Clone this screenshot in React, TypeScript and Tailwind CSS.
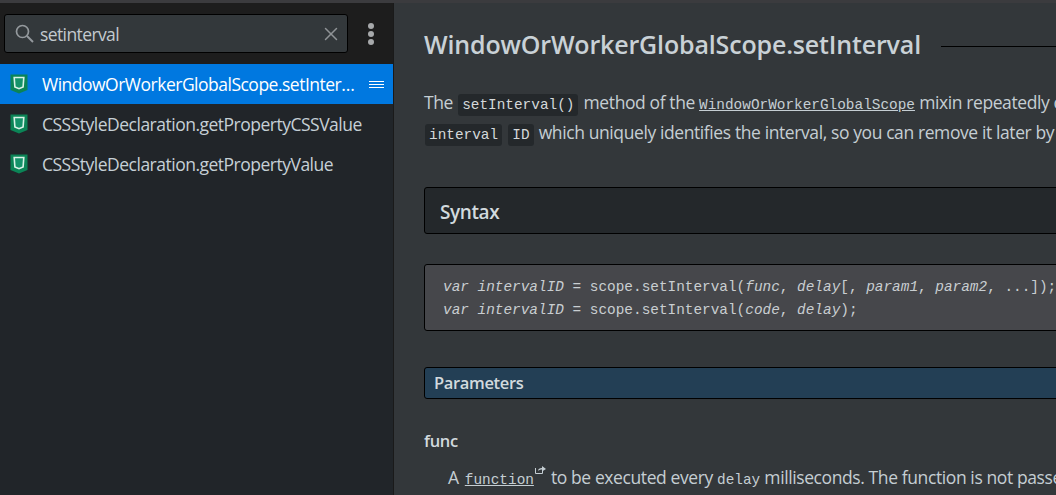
import { X } from 'lucide-react';

const sans = 'font-["Open_Sans","Noto_Sans",sans-serif]';
const mono = 'font-["Liberation_Mono","DejaVu_Sans_Mono",monospace] tracking-normal';

function ShieldIcon() {
  return (
    <svg width="18" height="20" viewBox="0 0 18 20" className="shrink-0">
      <path d="M0.500 0.500h17v15.500l-8.500 3.500-8.500-3.500z" fill="#0b8456" />
      <path d="M4.200 3.500h9.600l-0.700 9.500-4.100 1.700-4.100-1.700z" fill="#14936a" stroke="#d8f2e7" strokeWidth="1.600" />
    </svg>
  );
}

function ResultRow({ title, active }: { title: string; active?: boolean }) {
  return (
    <div className={`flex h-10 items-center pl-[10px] pr-[9px] ${active ? 'bg-[#0078e0] text-white' : 'text-[#c6d0d6]'}`}>
      <ShieldIcon />
      <span className="ml-[14px] min-w-0 flex-1 truncate text-[17.5px] tracking-[-0.5px]">{title}</span>
      {active && (
        <div className="ml-[14px] flex w-[15px] flex-col gap-[2px]">
          <div className="h-px bg-white" />
          <div className="h-px bg-white" />
          <div className="h-px bg-white" />
        </div>
      )}
    </div>
  );
}

function Code({ children }: { children: string }) {
  return (
    <code className={`${mono} mx-px rounded-[3px] bg-[#24282b] px-1 py-[3px] text-[14.4px] text-[#d4d8da]`}>
      {children}
    </code>
  );
}

export default function App() {
  return (
    <div className={`${sans} flex h-screen w-full flex-col overflow-hidden bg-[#33373a]`}>
      <div className="h-[3px] shrink-0 bg-[#3b3b3e]" />
      <div className="flex min-h-0 flex-1">
        <aside className="flex w-[394px] shrink-0 flex-col border-r border-[#1a1a1a] bg-[#212529]">
          <div className="flex h-[61px] shrink-0 items-center bg-[#1d1d1d] pl-1 pr-[19px]">
            <div className="flex h-[39px] flex-1 items-center rounded-[3px] border border-black bg-[#33383b] pl-[10px] pr-[5px]">
              <svg width="19" height="19" viewBox="0 0 19 19" className="shrink-0 text-[#94999d]">
                <circle cx="7.500" cy="7.500" r="6" fill="none" stroke="currentColor" strokeWidth="1.700" />
                <path d="M12 12l6 6" fill="none" stroke="currentColor" strokeWidth="2" />
              </svg>
              <span className="ml-[6px] flex-1 pt-px text-[17.5px] tracking-[-0.6px] text-[#c3cacf]">setinterval</span>
              <X size={22} strokeWidth={1.6} className="text-[#8f9396]" />
            </div>
            <div className="ml-[20px] flex flex-col gap-[2px]">
              <div className="h-[6px] w-[6px] rounded-full bg-[#a7a9ab]" />
              <div className="h-[6px] w-[6px] rounded-full bg-[#a7a9ab]" />
              <div className="h-[6px] w-[6px] rounded-full bg-[#a7a9ab]" />
            </div>
          </div>
          <ResultRow title="WindowOrWorkerGlobalScope.setInterval" active />
          <ResultRow title="CSSStyleDeclaration.getPropertyCSSValue" />
          <ResultRow title="CSSStyleDeclaration.getPropertyValue" />
        </aside>
        <main className="min-w-0 flex-1 overflow-hidden">
          <div className="w-[800px] pl-[30px] pt-[25px]">
            <div className="flex h-[34px] items-center">
              <h1 className="whitespace-nowrap text-[25px] font-semibold tracking-[-0.16px] text-[#c9d1d6]">
                WindowOrWorkerGlobalScope.setInterval
              </h1>
              <div className="ml-5 mt-[2px] h-px flex-1 bg-black" />
            </div>
            <div className="mt-[25px] whitespace-nowrap text-[17.5px] leading-[30px] tracking-[-0.4px] text-[#c5ced3]">
              <p className="h-[30px]">
                The <Code>setInterval()</Code> method of the{' '}
                <span className={`${mono} text-[14.4px] underline`}>WindowOrWorkerGlobalScope</span>{' '}
                mixin repeatedly calls a function
              </p>
              <p className="h-[30px]">
                <Code>interval</Code> <Code>ID</Code> which uniquely identifies the interval, so you can remove it later by calling
              </p>
            </div>
            <div className="mt-[40px] flex h-[47px] items-center rounded-[3px] border border-black bg-[#24282b] px-[15px] pt-[3px]">
              <h2 className="text-[19px] font-semibold tracking-[-0.4px] text-[#d2dade]">Syntax</h2>
            </div>
            <pre className={`${mono} mt-[30px] h-[67px] rounded-[3px] border border-black bg-[#46474b] px-[18px] py-[11px] text-[14.4px] leading-[23px] text-[#c9ced1]`}>
              <i>var intervalID</i> = scope.setInterval(<i>func</i>, <i>delay</i>[, <i>param1</i>, <i>param2</i>, ...]);{'\n'}
              <i>var intervalID</i> = scope.setInterval(<i>code</i>, <i>delay</i>);
            </pre>
            <div className="mt-[36px] flex h-[32px] items-center rounded-[3px] border border-black bg-[#233f55] px-[9px] pt-px">
              <h3 className="text-[16.5px] font-semibold tracking-[-0.35px] text-[#d2dade]">Parameters</h3>
            </div>
            <h4 className="mt-[30px] text-[16.5px] font-semibold tracking-[-0.3px] text-[#d2dade]">func</h4>
            <p className="mt-[10px] whitespace-nowrap pl-6 text-[17.5px] tracking-[-0.4px] text-[#c5ced3]">
              A <span className={`${mono} ml-[2px] text-[14.4px] underline`}>function</span>
              <svg width="11" height="8" viewBox="0 0 11 8" className="ml-px mr-[5px] inline align-[10px] text-[#c5ced3]">
                <path d="M0.500 2v5.500h7v-2.500" fill="none" stroke="currentColor" />
                <path d="M3 5c0-2 1.500-3 4-3v-2l4 3-4 2.500v-2c-1.500 0-3 0.500-4 1.500z" fill="currentColor" />
              </svg>
              to be executed every <span className={`${mono} text-[14.4px]`}>delay</span> milliseconds. The function is not passed any arguments
            </p>
          </div>
        </main>
      </div>
    </div>
  );
}
